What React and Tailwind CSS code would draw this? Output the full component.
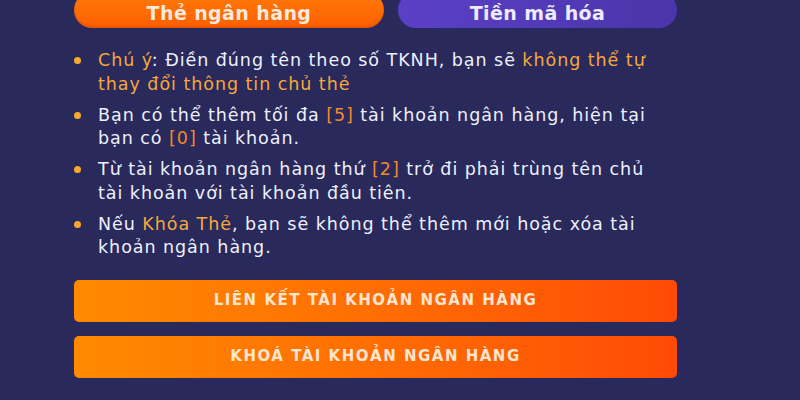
import React from "react";

const O = ({ children }) => <span className="text-[#f5a83c]">{children}</span>;
const B = ({ children }) => <span className="text-[#f08a2c]">{children}</span>;

function Item({ children }) {
  return (
    <li className="flex items-start">
      <span className="mt-[8px] h-[7px] w-[7px] shrink-0 rounded-full bg-[#f7a92b]" />
      <div className="ml-[17px] whitespace-nowrap">{children}</div>
    </li>
  );
}

export default function App() {
  return (
    <div className="h-[400px] w-[800px] overflow-hidden bg-[#29295b] font-['DejaVu_Sans',sans-serif] text-[#eef0fb]">
      <div className="mt-[-8px] flex gap-[14px] pl-[74px]">
        <div className="flex h-[36px] w-[310px] items-center justify-center rounded-full bg-gradient-to-b from-[#ff7a0a] to-[#ff5f00] pt-[6px] text-[19px] leading-none font-bold tracking-[0.4px] text-[#fbe9dc] shadow-[inset_0_-2px_3px_rgba(0,0,0,0.12)]">
          Thẻ ngân hàng
        </div>
        <div className="flex h-[36px] w-[279px] items-center justify-center rounded-full bg-gradient-to-r from-[#5b40c6] to-[#4a35aa] pt-[6px] text-[19px] leading-none font-bold tracking-[0.4px] text-[#eeeaff]">
          Tiền mã hóa
        </div>
      </div>

      <ul className="mt-[21px] flex flex-col gap-[7.5px] pl-[74px] text-[17.5px] leading-[23.5px] tracking-[0.95px]">
        <Item>
          <O>Chú ý</O>: Điền đúng tên theo số TKNH, bạn sẽ <O>không thể tự</O>
          <br />
          <O>thay đổi thông tin chủ thẻ</O>
        </Item>
        <Item>
          Bạn có thể thêm tối đa <B>[5]</B> tài khoản ngân hàng, hiện tại
          <br />
          bạn có <B>[0]</B> tài khoản.
        </Item>
        <Item>
          Từ tài khoản ngân hàng thứ <B>[2]</B> trở đi phải trùng tên chủ
          <br />
          tài khoản với tài khoản đầu tiên.
        </Item>
        <Item>
          Nếu <O>Khóa Thẻ</O>, bạn sẽ không thể thêm mới hoặc xóa tài
          <br />
          khoản ngân hàng.
        </Item>
      </ul>

      <div className="mt-[20px] ml-[74px] flex w-[603px] flex-col gap-[14px]">
        <div className="flex h-[42px] items-center justify-center rounded-[5px] bg-gradient-to-r from-[#ff8a00] to-[#ff4a06] text-[15px] font-bold tracking-[1.5px] text-[#fde6cf]">
          LIÊN KẾT TÀI KHOẢN NGÂN HÀNG
        </div>
        <div className="flex h-[42px] items-center justify-center rounded-[5px] bg-gradient-to-r from-[#ff8a00] to-[#ff4a06] text-[15px] font-bold tracking-[1.5px] text-[#fde6cf]">
          KHOÁ TÀI KHOẢN NGÂN HÀNG
        </div>
      </div>
    </div>
  );
}
